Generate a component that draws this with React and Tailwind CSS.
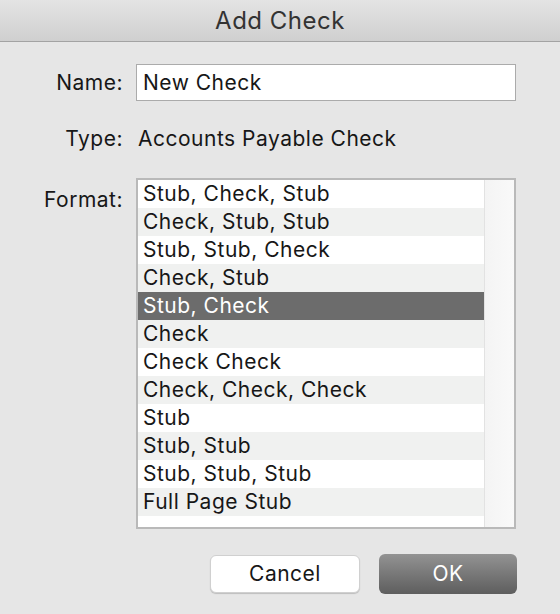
const formats = [
  "Stub, Check, Stub",
  "Check, Stub, Stub",
  "Stub, Stub, Check",
  "Check, Stub",
  "Stub, Check",
  "Check",
  "Check Check",
  "Check, Check, Check",
  "Stub",
  "Stub, Stub",
  "Stub, Stub, Stub",
  "Full Page Stub",
];

const selected = 4;

export default function App() {
  return (
    <div className="w-[560px] h-[614px] bg-[#e6e6e6] font-['Inter','Liberation_Sans',sans-serif] tracking-[0.5px] text-[#171717] overflow-hidden">
      {/* title bar */}
      <div className="h-[42px] flex items-center justify-center bg-gradient-to-b from-[#e4e4e4] to-[#cfcfcf] border-b border-[#a3a3a3]">
        <h1 className="text-[24px] text-[#333]">Add Check</h1>
      </div>

      {/* name */}
      <div className="flex items-center mt-[22px]">
        <div className="w-[123px] text-right text-[21px]">Name:</div>
        <div className="ml-[13px] w-[380px] h-[37px] bg-white border border-[#ababab] flex items-center pl-[6px] text-[21px]">
          New Check
        </div>
      </div>

      {/* type */}
      <div className="flex mt-[24px] leading-[28px] text-[21px]">
        <div className="w-[123px] text-right">Type:</div>
        <div className="ml-[15px]">Accounts Payable Check</div>
      </div>

      {/* format */}
      <div className="flex items-start mt-[25px]">
        <div className="w-[123px] text-right text-[21px] leading-[28px] mt-[8px]">Format:</div>
        <div className="ml-[13px] w-[380px] h-[351px] border-2 border-[#b9b9b9] bg-white flex">
          <div className="flex-1 flex flex-col">
            {formats.map((f, i) => (
              <div
                key={i}
                className={
                  i === selected
                    ? "h-[28px] leading-[28px] pl-[5px] text-[21px] bg-[#6c6c6c] text-white"
                    : i % 2 === 0
                    ? "h-[28px] leading-[28px] pl-[5px] text-[21px] bg-white"
                    : "h-[28px] leading-[28px] pl-[5px] text-[21px] bg-[#f0f1f0]"
                }
              >
                {f}
              </div>
            ))}
            <div className="flex-1 bg-white" />
          </div>
          <div className="w-[30px] border-l border-[#e2e2e2] bg-gradient-to-r from-[#f4f4f4] to-[#f9f9f9]" />
        </div>
      </div>

      {/* buttons */}
      <div className="flex items-center mt-[25px] pl-[210px]">
        <button className="w-[150px] h-[38px] bg-white rounded-[6px] border border-[#d0d0d0] shadow-[0_1px_1px_rgba(0,0,0,0.18)] text-[21px] text-[#171717]">
          Cancel
        </button>
        <button className="ml-[19px] w-[138px] h-[40px] rounded-[6px] bg-gradient-to-b from-[#939393] to-[#5e5e5e] text-white text-[21px]">
          OK
        </button>
      </div>
    </div>
  );
}
